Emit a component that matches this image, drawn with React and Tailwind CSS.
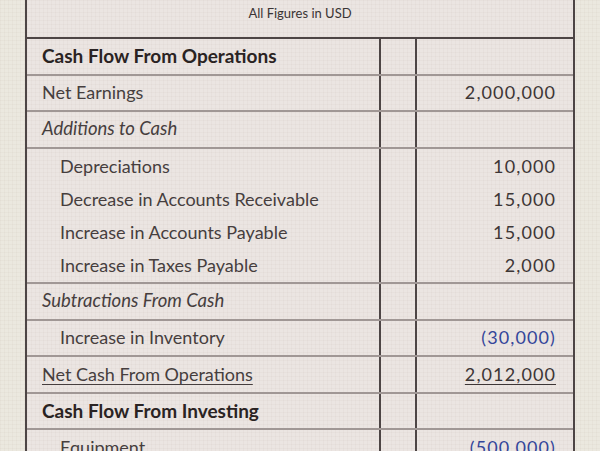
const rows = [
  { label: 'Cash Flow From Operations', kind: 'heading' },
  { label: 'Net Earnings', value: '2,000,000' },
  { label: 'Additions to Cash', kind: 'italic' },
  {
    kind: 'group',
    items: [
      { label: 'Depreciations', value: '10,000' },
      { label: 'Decrease in Accounts Receivable', value: '15,000' },
      { label: 'Increase in Accounts Payable', value: '15,000' },
      { label: 'Increase in Taxes Payable', value: '2,000' },
    ],
  },
  { label: 'Subtractions From Cash', kind: 'italic' },
  { label: 'Increase in Inventory', value: '(30,000)', indent: true, negative: true },
  { label: 'Net Cash From Operations', value: '2,012,000', kind: 'total' },
  { label: 'Cash Flow From Investing', kind: 'heading' },
  { label: 'Equipment', value: '(500,000)', indent: true, negative: true },
]

const gridBg =
  'bg-[linear-gradient(rgba(140,120,110,0.045)_1px,transparent_1px),linear-gradient(90deg,rgba(140,120,110,0.045)_1px,transparent_1px)] bg-[size:4px_4px]'

const Row = ({ row }) => {
  if (row.kind === 'group') {
    return (
      <div className="grid grid-cols-[354px_36px_1fr] h-[135.5px] border-b-2 border-[#a09795]">
        <div className="border-r-2 border-[#4d4545] pl-[33px] pt-[1px]">
          {row.items.map((item) => (
            <div key={item.label} className="h-[33px] leading-[33px] text-[#463e3e]">{item.label}</div>
          ))}
        </div>
        <div className="border-r-2 border-[#4d4545]" />
        <div className="pr-[17px] pt-[1px] text-right tracking-[1.1px]">
          {row.items.map((item) => (
            <div key={item.label} className="h-[33px] leading-[33px] text-[#3d3636]">{item.value}</div>
          ))}
        </div>
      </div>
    )
  }

  let labelClass = 'text-[#463e3e]'
  if (row.kind === 'heading') labelClass = 'font-bold text-[19px] text-[#2a2323]'
  if (row.kind === 'italic') labelClass = 'italic text-[18.5px] text-[#463e3e]'
  if (row.kind === 'total') labelClass = 'underline underline-offset-[3px] decoration-1 text-[#463e3e]'

  return (
    <div className="grid grid-cols-[354px_36px_1fr] h-[36.5px] border-b-2 border-[#a09795]">
      <div className={`flex items-center border-r-2 border-[#4d4545] ${row.indent ? 'pl-[33px]' : 'pl-[15px]'}`}>
        <span className={labelClass}>{row.label}</span>
      </div>
      <div className="border-r-2 border-[#4d4545]" />
      <div className="flex items-center justify-end pr-[17px]">
        {row.value && (
          <span
            className={`tracking-[1.1px] ${row.negative ? 'text-[#34469a]' : 'text-[#3d3636]'} ${row.kind === 'total' ? 'underline underline-offset-[3px] decoration-1' : ''}`}
          >
            {row.value}
          </span>
        )}
      </div>
    </div>
  )
}

export default function App() {
  return (
    <div className={`h-[451px] w-[600px] overflow-hidden bg-[#ebe8df] font-['Lato',sans-serif] text-[18px] ${gridBg}`}>
      <div className={`ml-[25px] w-[550px] border-x-2 border-[#4d4545] bg-[#ebe5e2] ${gridBg}`}>
        {/* Header */}
        <div className="h-[39px] border-b-2 border-[#4d4545] pt-[4px] text-center text-[13px] text-[#3a3434]">
          All Figures in USD
        </div>
        {rows.map((row, i) => (
          <Row key={i} row={row} />
        ))}
      </div>
    </div>
  )
}
